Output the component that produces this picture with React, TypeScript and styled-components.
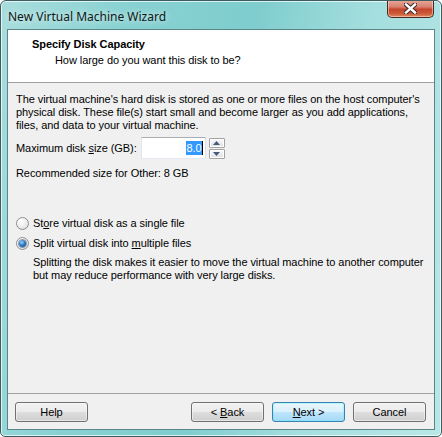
import React from "react";
import styled, { createGlobalStyle } from "styled-components";

const GlobalStyle = createGlobalStyle`
  html, body {
    margin: 0;
    padding: 0;
    background: #ffffff;
  }
  body {
    font-family: "Liberation Sans", Arial, sans-serif;
    font-size: 11px;
    letter-spacing: -0.07px;
    color: #000000;
  }
  * {
    box-sizing: border-box;
  }
`;

const Frame = styled.div`
  width: 442px;
  height: 437px;
  display: flex;
  flex-direction: column;
  padding: 0 6px 6px;
  border: 1px solid #3d5e60;
  border-radius: 6px 6px 5px 5px;
  background: linear-gradient(
    100deg,
    #a9dddd 0%,
    #88d1d2 25%,
    #7fcdce 50%,
    #a4dede 72%,
    #b9e7e7 100%
  );
  box-shadow: inset 0 0 0 1px rgba(255, 255, 255, 0.7);
  overflow: hidden;
`;

const TitleBar = styled.div`
  height: 28px;
  display: flex;
  align-items: flex-start;
  justify-content: space-between;
`;

const TitleText = styled.div`
  padding: 7px 0 0 1px;
  font-family: "Noto Sans", "Open Sans", sans-serif;
  font-size: 12px;
  letter-spacing: 0;
  color: #101818;
  text-shadow: 0 0 6px rgba(255, 255, 255, 0.9);
`;

const CloseButton = styled.div`
  width: 47px;
  height: 18px;
  margin: -1px 1px 0 0;
  border: 1px solid #4a2a22;
  border-top: none;
  border-radius: 0 0 5px 5px;
  background: linear-gradient(
    180deg,
    #e9a99a 0%,
    #d88170 40%,
    #c5452c 55%,
    #cc5a38 80%,
    #e08a64 100%
  );
  box-shadow: inset 0 0 0 1px rgba(255, 220, 210, 0.55);
  display: flex;
  align-items: center;
  justify-content: center;
`;

const Client = styled.div`
  flex: 1;
  display: flex;
  flex-direction: column;
  border: 1px solid #5c8587;
  background: #f0f0f0;
`;

const Header = styled.div`
  height: 53px;
  padding: 8px 0 0 24px;
  background: #ffffff;
  border-bottom: 1px solid #a0a0a0;
`;

const HeaderTitle = styled.div`
  font-weight: 700;
  line-height: 13px;
`;

const HeaderSubtitle = styled.div`
  margin-top: 3px;
  padding-left: 23px;
  line-height: 13px;
`;

const Body = styled.div`
  flex: 1;
  padding: 10px 8px 0;
  line-height: 13px;
  white-space: nowrap;
`;

const Paragraph = styled.p`
  margin: 0;
`;

const SizeRow = styled.div`
  display: flex;
  align-items: center;
  margin-top: 5px;
`;

const FieldLabel = styled.label`
  flex-shrink: 0;
  margin-right: 4px;
  padding-top: 1px;
`;

const NumberBox = styled.div`
  width: 65px;
  height: 22px;
  border: 1px solid;
  border-color: #abadb3 #dbdfe6 #e3e9ef #e2e3ea;
  background: #ffffff;
  display: flex;
  align-items: center;
  justify-content: flex-end;
  padding-right: 2px;
`;

const Selected = styled.span`
  background: #3399ff;
  color: #ffffff;
  line-height: 14px;
  padding: 0 0 0 1px;
`;

const Caret = styled.span`
  width: 1px;
  height: 14px;
  background: #000000;
`;

const Spinner = styled.div`
  margin-left: 3px;
  display: flex;
  flex-direction: column;
  gap: 1px;
`;

const SpinButton = styled.div`
  width: 16px;
  height: 10px;
  border: 1px solid #a2a2a2;
  border-radius: 1px;
  background: linear-gradient(180deg, #fbfbfb 0%, #ececec 50%, #dedede 100%);
  box-shadow: inset 0 0 0 1px #ffffff;
  display: flex;
  align-items: center;
  justify-content: center;
`;

const Recommended = styled.div`
  margin-top: 8px;
`;

const RadioGroup = styled.div`
  margin-top: 37px;
  display: flex;
  flex-direction: column;
  gap: 7px;
`;

const RadioRow = styled.label`
  display: flex;
  align-items: center;
  gap: 4px;
  height: 13px;
`;

const RadioCircle = styled.span<{ $checked?: boolean }>`
  width: 13px;
  height: 13px;
  flex-shrink: 0;
  border-radius: 50%;
  border: 1px solid #8f8f8f;
  background: radial-gradient(circle at 35% 30%, #ffffff 0%, #f0f0f0 45%, #d4d4d4 100%);
  display: flex;
  align-items: center;
  justify-content: center;

  &::after {
    content: "";
    display: ${(p) => (p.$checked ? "block" : "none")};
    width: 7px;
    height: 7px;
    border-radius: 50%;
    background: radial-gradient(circle at 40% 35%, #9fd8ff 0%, #2c7cc7 45%, #0e3e7a 100%);
    box-shadow: 0 0 0 1px rgba(40, 70, 110, 0.5);
  }
`;

const Description = styled.div`
  margin-top: 6px;
  padding-left: 17px;
`;

const Footer = styled.div`
  display: flex;
  align-items: center;
  gap: 8px;
  padding: 8px 8px 7px 7px;
  border-top: 1px solid #a0a0a0;
`;

const Spacer = styled.div`
  flex: 1;
`;

const Button = styled.div<{ $default?: boolean }>`
  width: 73px;
  height: 20px;
  border: 1px solid ${(p) => (p.$default ? "#3c7fb1" : "#707070")};
  border-radius: 3px;
  background: ${(p) =>
    p.$default
      ? "linear-gradient(180deg, #eaf6fd 0%, #d9f0fc 50%, #bee6fd 51%, #a7d9f5 100%)"
      : "linear-gradient(180deg, #f2f2f2 0%, #ebebeb 50%, #dddddd 51%, #cfcfcf 100%)"};
  box-shadow: inset 0 0 0 1px ${(p) => (p.$default ? "#48fdff55" : "#fcfcfc88")};
  display: flex;
  align-items: center;
  justify-content: center;
  line-height: 13px;
  white-space: pre;
`;

const CloseGlyph = () => (
  <svg width="13" height="11" viewBox="0 0 13 11">
    <path
      d="M2 1.5 L11 9.5 M11 1.5 L2 9.5"
      stroke="#3b2a28"
      strokeWidth="4.4"
      strokeLinecap="square"
    />
    <path
      d="M2 1.5 L11 9.5 M11 1.5 L2 9.5"
      stroke="#ffffff"
      strokeWidth="2.4"
      strokeLinecap="square"
    />
  </svg>
);

const Arrow = ({ up }: { up?: boolean }) => (
  <svg width="7" height="4" viewBox="0 0 7 4">
    <path d={up ? "M0 4 L3.5 0 L7 4 Z" : "M0 0 L3.5 4 L7 0 Z"} fill="#44597d" />
  </svg>
);

const App = () => (
  <>
    <GlobalStyle />
    <Frame>
      <TitleBar>
        <TitleText>New Virtual Machine Wizard</TitleText>
        <CloseButton>
          <CloseGlyph />
        </CloseButton>
      </TitleBar>
      <Client>
        <Header>
          <HeaderTitle>Specify Disk Capacity</HeaderTitle>
          <HeaderSubtitle>How large do you want this disk to be?</HeaderSubtitle>
        </Header>
        <Body>
          <Paragraph>
            The virtual machine's hard disk is stored as one or more files on the host computer's
            <br />
            physical disk. These file(s) start small and become larger as you add applications,
            <br />
            files, and data to your virtual machine.
          </Paragraph>
          <SizeRow>
            <FieldLabel>
              Maximum disk <u>s</u>ize (GB):
            </FieldLabel>
            <NumberBox>
              <Selected>8.0</Selected>
              <Caret />
            </NumberBox>
            <Spinner>
              <SpinButton>
                <Arrow up />
              </SpinButton>
              <SpinButton>
                <Arrow />
              </SpinButton>
            </Spinner>
          </SizeRow>
          <Recommended>Recommended size for Other: 8 GB</Recommended>
          <RadioGroup>
            <RadioRow>
              <RadioCircle />
              <span>
                St<u>o</u>re virtual disk as a single file
              </span>
            </RadioRow>
            <RadioRow>
              <RadioCircle $checked />
              <span>
                Split virtual disk into <u>m</u>ultiple files
              </span>
            </RadioRow>
          </RadioGroup>
          <Description>
            Splitting the disk makes it easier to move the virtual machine to another computer
            <br />
            but may reduce performance with very large disks.
          </Description>
        </Body>
        <Footer>
          <Button>Help</Button>
          <Spacer />
          <Button>
            <span>
              {"< "}
              <u>B</u>ack
            </span>
          </Button>
          <Button $default>
            <span>
              <u>N</u>
              {"ext >"}
            </span>
          </Button>
          <Button>Cancel</Button>
        </Footer>
      </Client>
    </Frame>
  </>
);

export default App;
